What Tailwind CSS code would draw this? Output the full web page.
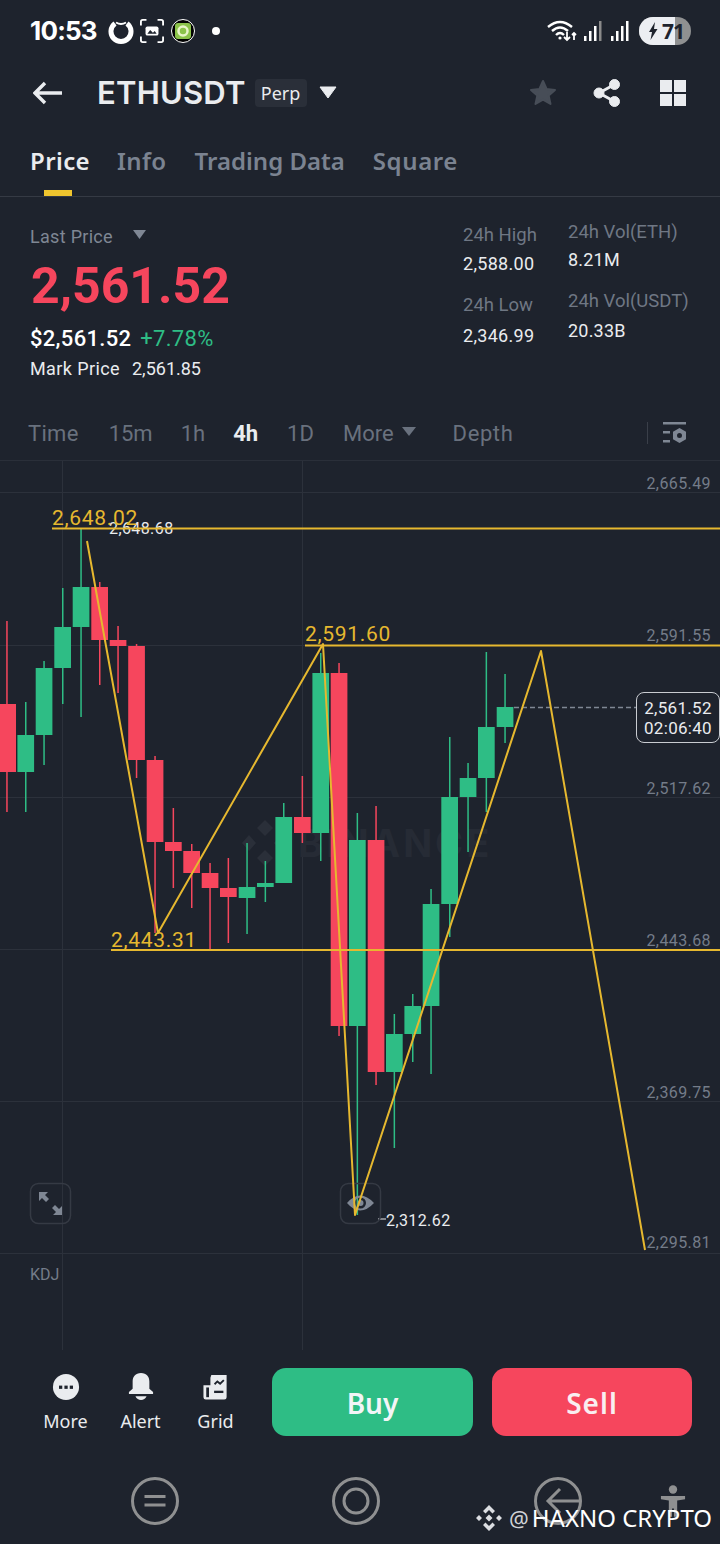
<!DOCTYPE html>
<html lang="en">
<head>
    <meta charset="UTF-8">
    <meta name="viewport" content="width=device-width, initial-scale=1.0">
    <title>ETHUSDT Perp</title>
    <script src="https://cdn.jsdelivr.net/npm/@tailwindcss/browser@4"></script>
</head>
<body class="bg-[#1e232d] font-['Noto_Sans',sans-serif] text-[#eaecef]">
<div class="w-[720px] h-[1544px] overflow-hidden relative flex flex-col">

    <!-- status bar -->
    <div class="h-[60px] shrink-0 flex items-center justify-between pl-[30px] pr-[29px] pt-[2px]">
        <div class="flex items-center">
            <span class="text-[26px] font-bold leading-none text-white font-['Inter',sans-serif] tracking-[-0.8px]">10:53</span>
            <svg class="ml-[11px]" width="26" height="26" viewBox="0 0 26 26" fill="none"><path d="M7 5.500a10 10 0 1 0 12 0" stroke="#fff" stroke-width="5"/><path d="M8 4.500q5 3 10 0" stroke="#fff" stroke-width="2"/></svg>
            <svg class="ml-[6px]" width="24" height="24" viewBox="0 0 26 26" fill="none" stroke="#fff" stroke-width="2"><path d="M1 7V3q0-2 2-2h4M19 1h4q2 0 2 2v4M25 19v4q0 2-2 2h-4M7 25H3q-2 0-2-2v-4"/><rect x="6" y="8" width="14" height="10" rx="2" fill="#fff" stroke="none"/><path d="M8 16l3-4 3 3 2-2 2 3z" fill="#1e232d" stroke="none"/></svg>
            <svg class="ml-[7px]" width="24" height="24" viewBox="0 0 24 24"><circle cx="12" cy="12" r="11.500" fill="#000" stroke="#fff" stroke-width="1"/><rect x="4" y="4" width="16" height="16" rx="3" fill="#8bc34a"/><circle cx="12" cy="12" r="4.500" fill="none" stroke="#e8f5c8" stroke-width="2.500"/></svg>
            <span class="ml-[17px] w-[8px] h-[8px] rounded-full bg-white"></span>
        </div>
        <div class="flex items-center">
            <svg width="30" height="24" viewBox="0 0 30 24" fill="none" stroke="#fff" stroke-width="2.400"><path d="M1 8q12-10 24 0M5 12q8-7 16 0M9 16q4-4 8 0"/><circle cx="13" cy="19" r="1.600" fill="#fff" stroke="none"/><path d="M20 13v8M17 18l3 3 3-3M27 21v-7M25 16l2-2 2 2" stroke-width="1.800"/></svg>
            <svg class="ml-[7px]" width="18" height="20" viewBox="0 0 18 20" fill="#fff"><rect x="0" y="15" width="2.500" height="5"/><rect x="5" y="10" width="2.500" height="10"/><rect x="10" y="5" width="2.500" height="15"/><rect x="15" y="0" width="2.500" height="20" fill="#8a8a8a"/></svg>
            <svg class="ml-[9px]" width="18" height="20" viewBox="0 0 18 20" fill="#fff"><rect x="0" y="15" width="2.500" height="5"/><rect x="5" y="10" width="2.500" height="10"/><rect x="10" y="5" width="2.500" height="15"/><rect x="15" y="0" width="2.500" height="20"/></svg>
            <div class="ml-[10px] w-[52px] h-[28px] rounded-full relative bg-[#8f9091] flex items-center">
                <div class="absolute left-0 top-0 bottom-0 w-[36px] rounded-l-full bg-[#eceef2]"></div>
                <svg class="relative ml-[9px]" width="10" height="18" viewBox="0 0 10 18" fill="#1e232d"><path d="M7 0L1 10h3l-1.500 8L9.500 7H6z"/></svg>
                <span class="relative ml-[4px] text-[21px] font-bold leading-none tracking-[-1px] text-[#1e232d]">71</span>
            </div>
        </div>
    </div>

    <!-- title row -->
    <div class="h-[65px] shrink-0 flex items-center pl-[33px] pr-[34px]">
        <svg width="29" height="24" viewBox="0 0 29 24" fill="none" stroke="#eaecef" stroke-width="3.400"><path d="M29 12H3M12 2L2 12l10 10"/></svg>
        <span class="ml-[35px] text-[31px] font-semibold leading-none tracking-[0.2px] font-['Inter',sans-serif]">ETHUSDT</span>
        <span class="ml-[9px] w-[52px] h-[28px] rounded-[4px] bg-[#2a2f39] flex items-center justify-center text-[18px] leading-none">Perp</span>
        <svg class="ml-[12px]" width="18" height="13" viewBox="0 0 18 13" fill="#eaecef"><path d="M1 1h16L9 12z" stroke="#eaecef" stroke-linejoin="round"/></svg>
        <div class="ml-auto flex items-center">
            <svg width="30" height="30" viewBox="0 0 30 30" fill="#474d57" stroke="#474d57" stroke-width="2" stroke-linejoin="round"><path d="M15 3l3.600 8 8.400.9-6.300 5.700 1.800 8.400-7.500-4.300L7.500 26l1.800-8.400L3 11.900l8.400-.9z"/></svg>
            <svg class="ml-[35px]" width="28" height="28" viewBox="0 0 28 28" fill="#eaecef" stroke="#eaecef"><circle cx="21.500" cy="5.500" r="5"/><circle cx="21.500" cy="22.500" r="5"/><circle cx="6" cy="14" r="5"/><path d="M6 14L21.500 5.500M6 14l15.500 8.500" stroke-width="3" fill="none"/></svg>
            <svg class="ml-[39px]" width="26" height="26" viewBox="0 0 26 26" fill="#eaecef"><rect width="12" height="12"/><rect x="14" width="12" height="12"/><rect y="14" width="12" height="12"/><rect x="14" y="14" width="12" height="12"/></svg>
        </div>
    </div>

    <!-- tabs -->
    <div class="h-[72px] shrink-0 border-b border-[#353a44] flex pl-[30px] text-[24px] font-semibold text-[#7b8391]">
        <div class="relative h-full flex items-center tracking-[0.4px] text-[#eaecef]">Price
            <span class="absolute left-[14px] w-[28px] bottom-0 h-[6px] bg-[#f0c52e]"></span>
        </div>
        <div class="ml-[27px] h-full flex items-center tracking-[0.4px]">Info</div>
        <div class="ml-[28px] h-full flex items-center">Trading Data</div>
        <div class="ml-[28px] h-full flex items-center tracking-[0.6px]">Square</div>
    </div>

    <!-- price summary -->
    <div class="h-[199px] shrink-0 flex font-['Roboto',sans-serif]">
        <div class="w-[463px] pl-[30px] pt-[27px]">
            <div class="flex items-center h-[24px] text-[18px] text-[#7f8794] tracking-[0.3px]">Last Price
                <svg class="ml-[20px] mb-[3px]" width="13" height="9" viewBox="0 0 13 9" fill="#7f8794"><path d="M0 0h13L6.500 9z"/></svg>
            </div>
            <div class="mt-[12px] ml-[1px] h-[52px] flex items-center text-[50px] font-bold leading-none text-[#f6465d]">2,561.52</div>
            <div class="mt-[12px] flex items-center h-[28px]">
                <span class="text-[22px] font-medium text-white tracking-[0.300px]">$2,561.52</span>
                <span class="ml-[9px] text-[22px] text-[#2ebd85] tracking-[0.300px]">+7.78%</span>
            </div>
            <div class="mt-[4px] h-[24px] flex items-center text-[18px] text-[#eaecef]">
                <span class="tracking-[0.4px]">Mark Price</span><span class="ml-[12px]">2,561.85</span>
            </div>
        </div>
        <div class="w-[105px] pt-[26px]">
            <div class="h-[26px] flex items-center text-[18.500px] text-[#6f7784]">24h High</div>
            <div class="mt-[1px] h-[26px] flex items-center text-[18px] tracking-[0.300px]">2,588.00</div>
            <div class="mt-[17px] h-[26px] flex items-center text-[18.500px] text-[#6f7784]">24h Low</div>
            <div class="mt-[3px] h-[26px] flex items-center text-[18px] tracking-[0.300px]">2,346.99</div>
        </div>
        <div class="flex-1 pt-[23px]">
            <div class="h-[26px] flex items-center text-[18.500px] text-[#6f7784]">24h Vol(ETH)</div>
            <div class="h-[26px] flex items-center text-[18px] tracking-[0.200px]">8.21M</div>
            <div class="mt-[17px] h-[26px] flex items-center text-[18.500px] text-[#6f7784]">24h Vol(USDT)</div>
            <div class="mt-[2px] h-[26px] flex items-center text-[18px] tracking-[0.200px]">20.33B</div>
        </div>
    </div>

    <!-- intervals -->
    <div class="h-[65px] shrink-0 flex items-center pl-[28px] pr-[33px] pt-[10px] border-b border-[#2a2f39] text-[22px] text-[#69717e] font-['Roboto',sans-serif]">
        <span class="tracking-[0.300px]">Time</span>
        <span class="ml-[30px]">15m</span>
        <span class="ml-[28px]">1h</span>
        <span class="ml-[28px] font-bold text-[#eaecef]">4h</span>
        <span class="ml-[29px]">1D</span>
        <span class="ml-[29px]">More</span>
        <svg class="ml-[8px] mb-[3px]" width="14" height="9" viewBox="0 0 14 9" fill="#69717e"><path d="M0 0h14L7 9z"/></svg>
        <span class="ml-[37px] tracking-[0.600px]">Depth</span>
        <span class="ml-auto w-[1px] h-[22px] bg-[#3a3f49]"></span>
        <svg class="ml-[15px]" width="24" height="24" viewBox="0 0 24 24" fill="#7f8794"><rect x="0" y="1" width="23" height="2.500"/><rect x="0" y="10" width="7" height="2.500"/><rect x="0" y="19" width="7" height="2.500"/><path fill-rule="evenodd" d="M16.500 7l6.500 3.700v7.600L16.500 22 10 18.300v-7.600zm0 5a2.500 2.500 0 1 0 0 5 2.500 2.500 0 0 0 0-5z"/></svg>
    </div>

    <!-- chart: coordinates in the svg are page pixels -->
    <div class="relative h-[889px] shrink-0">
        <svg class="absolute inset-0" width="720" height="889" viewBox="0 461 720 889">
            <!-- grid -->
            <g stroke="#2c313b" stroke-width="1">
                <path d="M0 492.500H720M0 645.500H720M0 797.500H720M0 949.500H720M0 1101.500H720M0 1253.500H720M62.500 461V1350M302.500 461V1350"/>
            </g>
            <!-- watermark -->
            <path d="M265 820l8 8-8 8-8-8zM249 835l7 8-7 8-7-8zM281 835l7 8-7 8-7-8zM265 850l8 8-8 8-8-8z" fill="#2a2f39"/>
            <text x="298" y="857" class="text-[38px] font-bold fill-[#262b35] font-['Inter',sans-serif] tracking-[3px]">BINANCE</text>
            <!-- red candles -->
            <g fill="#f6465d">
                <rect x="6.200" y="621" width="1.500" height="191"/><rect x="-1" y="704" width="17" height="68"/>
                <rect x="99" y="582" width="1.500" height="103"/><rect x="91.300" y="587" width="16.700" height="53"/>
                <rect x="117.300" y="626" width="1.500" height="67"/><rect x="109.700" y="640" width="16.700" height="6"/>
                <rect x="135.800" y="644" width="1.500" height="134"/><rect x="128.200" y="646" width="16.700" height="114"/>
                <rect x="154.300" y="756" width="1.500" height="177"/><rect x="146.700" y="760" width="16.700" height="82"/>
                <rect x="172.600" y="808" width="1.500" height="80"/><rect x="165" y="842" width="16.700" height="9"/>
                <rect x="191" y="844" width="1.500" height="64"/><rect x="183.300" y="851" width="16.700" height="22"/>
                <rect x="209.300" y="863" width="1.500" height="87"/><rect x="201.700" y="873" width="16.700" height="15"/>
                <rect x="227.600" y="858" width="1.500" height="85"/><rect x="220" y="888" width="16.700" height="9"/>
                <rect x="301.600" y="776" width="1.500" height="67"/><rect x="294" y="817" width="16.700" height="16"/>
                <rect x="338.300" y="663" width="1.500" height="373"/><rect x="330.700" y="673" width="16.700" height="353"/>
                <rect x="375.300" y="806" width="1.500" height="279"/><rect x="367.700" y="840" width="16.700" height="232"/>
            </g>
            <!-- green candles -->
            <g fill="#2ebd85">
                <rect x="25" y="702" width="1.500" height="110"/><rect x="17.400" y="735" width="16.700" height="37"/>
                <rect x="43.300" y="661" width="1.500" height="104"/><rect x="35.700" y="668" width="16.700" height="67"/>
                <rect x="62" y="588" width="1.500" height="116"/><rect x="54.300" y="627" width="16.700" height="41"/>
                <rect x="80.300" y="528" width="1.500" height="189"/><rect x="72.700" y="587" width="16.700" height="40"/>
                <rect x="246.300" y="843" width="1.500" height="91"/><rect x="238.700" y="887" width="16.700" height="11"/>
                <rect x="264.600" y="861" width="1.500" height="41"/><rect x="257" y="883" width="16.700" height="4"/>
                <rect x="283" y="803" width="1.500" height="80"/><rect x="275.400" y="817" width="16.700" height="66"/>
                <rect x="320" y="653" width="1.500" height="208"/><rect x="312.400" y="673" width="16.700" height="160"/>
                <rect x="356.600" y="813" width="1.500" height="402"/><rect x="349" y="840" width="16.700" height="186"/>
                <rect x="393.600" y="1014" width="1.500" height="134"/><rect x="386" y="1034" width="16.700" height="38"/>
                <rect x="412" y="994" width="1.500" height="68"/><rect x="404.400" y="1006" width="16.700" height="28"/>
                <rect x="430.300" y="889" width="1.500" height="185"/><rect x="422.700" y="904" width="16.700" height="102"/>
                <rect x="449" y="737" width="1.500" height="200"/><rect x="441.300" y="797" width="16.700" height="107"/>
                <rect x="467.300" y="763" width="1.500" height="89"/><rect x="459.700" y="778" width="16.700" height="19"/>
                <rect x="485.600" y="652" width="1.500" height="160"/><rect x="478" y="727" width="16.700" height="51"/>
                <rect x="504.300" y="674" width="1.500" height="69"/><rect x="496.700" y="707" width="16.700" height="20"/>
            </g>
            <!-- current price line -->
            <path d="M514 707.500H636" stroke="#7f8794" stroke-width="1.500" stroke-dasharray="5 3"/>
            <!-- axis labels -->
            <g class="text-[16px] fill-[#747c89] font-['Roboto',sans-serif] tracking-[0.400px]" text-anchor="end">
                <text x="711" y="489">2,665.49</text>
                <text x="711" y="641">2,591.55</text>
                <text x="711" y="794">2,517.62</text>
                <text x="711" y="946">2,443.68</text>
                <text x="711" y="1098">2,369.75</text>
                <text x="711" y="1248">2,295.81</text>
            </g>
            <g class="text-[16px] fill-[#eaecef] font-['Roboto',sans-serif] tracking-[0.400px]">
                <text x="109" y="534">2,648.68</text>
                <text x="386" y="1226">2,312.62</text>
            </g>
            <path d="M378 1219h8" stroke="#eaecef" stroke-width="1"/>
            <!-- fullscreen and eye -->
            <rect x="30.500" y="1183.500" width="40" height="40" rx="8" fill="none" stroke="#353a44" stroke-width="1.500"/>
            <path d="M39 1192h9l-3 3 4 4-3 3-4-4-3 3zM62 1215h-9l3-3-4-4 3-3 4 4 3-3z" fill="#7f8794"/>
            <rect x="340.500" y="1183.500" width="40" height="40" rx="8" fill="none" stroke="#353a44" stroke-width="1.500"/>
            <path fill-rule="evenodd" d="M347 1203q13-15 27 0q-14 15-27 0zm13.500-5.500a5.500 5.500 0 1 0 0 11 5.500 5.500 0 0 0 0-11z" fill="#7f8794"/>
            <circle cx="360.500" cy="1203" r="3" fill="#7f8794"/>
            <!-- drawings -->
            <g stroke="#e6b82f" fill="none">
                <path d="M52 528.500H720M305 645.500H720M111 950H720" stroke-width="2"/>
                <path d="M87 541L158 933L323 644L355 1215L541 651L645 1250" stroke-width="2" stroke-linejoin="round"/>
            </g>
            <g class="text-[21px] fill-[#e6b82f] font-['Roboto',sans-serif] tracking-[0.700px]">
                <text x="52" y="525">2,648.02</text>
                <text x="305" y="641">2,591.60</text>
                <text x="111" y="947">2,443.31</text>
            </g>
            <text x="30" y="1280" class="text-[16px] fill-[#747c89] font-['Roboto',sans-serif]">KDJ</text>
        </svg>
        <!-- last price tag -->
        <div class="absolute left-[636px] top-[231px] w-[84px] h-[51px] rounded-[8px] border border-[#c9ccd1] bg-[#1e232d] flex flex-col items-center justify-center text-[17px] leading-[20px] text-[#eaecef] font-['Roboto',sans-serif] tracking-[0.300px]">
            <span>2,561.52</span>
            <span>02:06:40</span>
        </div>
    </div>

    <!-- actions -->
    <div class="h-[110px] shrink-0 flex items-start pt-[18px] pl-[28px] pr-[28px]">
        <div class="flex mt-[5px] text-[18px] leading-[24px] text-[#eaecef]">
            <div class="w-[75px] flex flex-col items-center">
                <svg width="28" height="28" viewBox="0 0 30 30"><circle cx="15" cy="15" r="14" fill="#eaecef"/><rect x="7.500" y="13.500" width="3.500" height="3.500" fill="#1e232d"/><rect x="13.300" y="13.500" width="3.500" height="3.500" fill="#1e232d"/><rect x="19" y="13.500" width="3.500" height="3.500" fill="#1e232d"/></svg>
                <span class="mt-[8px]">More</span>
            </div>
            <div class="w-[75px] flex flex-col items-center">
                <svg width="26" height="28" viewBox="0 0 28 30" fill="#eaecef"><path d="M14 0c6 0 9 4 9 9v8l4 3.500v2H1v-2l4-3.500V9c0-5 3-9 9-9z"/><path d="M8 25h12q-2 4-6 4t-6-4z"/></svg>
                <span class="mt-[8px]">Alert</span>
            </div>
            <div class="w-[75px] flex flex-col items-center">
                <svg width="25" height="28" viewBox="0 0 27 30" fill="#eaecef"><path d="M9 2h16.500v24q0 2.500-2.500 2.500H3q-2.500 0-2.500-2.500V13H8V5z"/><path d="M3.500 15.500h3V26h-3z" fill="#1e232d"/><path d="M12.500 12l3-3 3 2.500 4-4" fill="none" stroke="#1e232d" stroke-width="2"/><rect x="12" y="19" width="10" height="2.500" fill="#1e232d"/></svg>
                <span class="mt-[8px]">Grid</span>
            </div>
        </div>
        <button class="ml-[19px] w-[201px] h-[68px] rounded-[14px] bg-[#2ebd85] pt-[1px] text-[28px] font-semibold text-[#f3f5f7]">Buy</button>
        <button class="ml-[19px] w-[200px] h-[68px] rounded-[14px] bg-[#f6465d] pt-[1px] text-[28px] font-semibold tracking-[1px] text-[#f9eef0]">Sell</button>
    </div>

    <!-- nav bar -->
    <div class="h-[84px] shrink-0 flex items-start pt-[17px] pl-[131px]">
        <svg width="48" height="48" viewBox="0 0 48 48" fill="none" stroke="#8f9091" stroke-width="3"><circle cx="24" cy="24" r="22.500"/><path d="M13.500 19.500h21M13.500 28h21"/></svg>
        <svg class="ml-[153px]" width="48" height="48" viewBox="0 0 48 48" fill="none" stroke="#8f9091" stroke-width="3"><circle cx="24" cy="24" r="22.500"/><circle cx="24" cy="24" r="12" stroke-width="3"/></svg>
        <svg class="ml-[154px]" width="48" height="48" viewBox="0 0 48 48" fill="none" stroke="#8f9091" stroke-width="3"><circle cx="24" cy="24" r="22.500"/><path d="M15 24h32M26 12L14 24l12 12"/></svg>
        <svg class="ml-[78px] mt-[8px]" width="26" height="34" viewBox="0 0 28 36" fill="#8f9091"><circle cx="14" cy="4.500" r="4.500"/><path d="M1 11.500h26v3.500l-8.500 1.500V34h-3.500v-9h-2v9H9.500V16.500L1 15z"/></svg>
    </div>

    <!-- watermark -->
    <div class="absolute left-[475px] top-[1502px] flex items-center h-[32px] whitespace-nowrap">
        <svg width="28" height="28" viewBox="0 0 28 28" fill="#dcdee2"><path d="M14 1l6 6-2.500 2.500L14 6l-3.500 3.500L8 7zM4 11l3 3-3 3-3-3zM24 11l3 3-3 3-3-3zM14 10.500l3.500 3.500-3.500 3.500-3.500-3.500zM14 27l-6-6 2.500-2.500L14 22l3.500-3.500L20 21z"/></svg>
        <span class="ml-[6px] text-[22px] leading-none text-[#cfd2d6]">@</span>
        <span class="ml-[3px] text-[24px] leading-none text-white">HAXNO CRYPTO</span>
    </div>
</div>
</body>
</html>
